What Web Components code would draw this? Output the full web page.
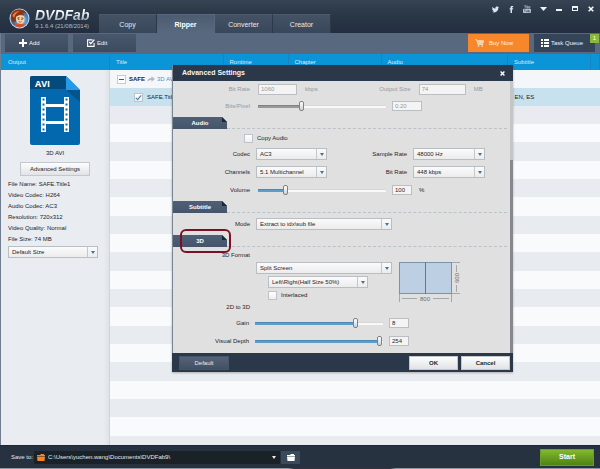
<!DOCTYPE html>
<html lang="en">
<head>
<meta charset="utf-8">
<title>DVDFab Ripper</title>
<style>
  body { margin: 0; font: 6px/8px "Liberation Sans", Arial, sans-serif; color: #1d2226; background: #e9ecf1; }
</style>
</head>
<body>
<df-app></df-app>
<script>
const base = `<style>
  *, ::before, ::after { box-sizing: border-box; }
  button, input, select { font: inherit; color: inherit; margin: 0; border-radius: 0; }
  button { cursor: pointer; padding: 0; border: 0; background: none; }
  svg { display: block; flex: none; }
</style>`;

function define(name, render) {
  customElements.define(name, class extends HTMLElement {
    connectedCallback() {
      if (this.shadowRoot) return;
      const t = document.createElement('template');
      t.innerHTML = base + render(n => this.getAttribute(n) || '', n => this.hasAttribute(n));
      this.attachShadow({ mode: 'open' }).appendChild(t.content.cloneNode(true));
    }
  });
}

/* ---------- form controls ---------- */
define('df-select', a => `<style>
  :host { display: flex; align-items: center; gap: 6px; }
  label { width: var(--label, 77px); text-align: right; flex: none; }
  .box { position: relative; width: var(--w, 71px); height: 12px; flex: none; }
  select { appearance: none; display: block; width: 100%; height: 100%; padding: 0 12px 0 3px; line-height: 10px;
    border: 1px solid #b9bec3; background: linear-gradient(#fbfbfb, #ececec); }
  .box::before { content: ""; position: absolute; right: 10px; top: 1px; bottom: 1px; width: 1px; background: #c3c8cd; }
  .box::after { content: ""; position: absolute; right: 3px; top: 5px; border: 2px solid transparent; border-top: 3px solid #3f7597; border-bottom: 0; pointer-events: none; }
</style>
${a('label') ? `<label for="s">${a('label')}</label>` : ''}
<div class="box"><select id="s" aria-label="${a('label') || a('name')}"><option>${a('value')}</option></select></div>`);

define('df-text', (a, h) => `<style>
  :host { display: flex; align-items: center; gap: 8px; }
  label { width: var(--label, 77px); text-align: right; flex: none; }
  input { width: var(--w, 39px); height: 11px; padding: 0 2px; border: 1px solid #bcbfc2; background: #f4f4f4; line-height: 9px; }
  :host([disabled]) { color: #989898; }
</style>
<label for="t">${a('label')}</label><input id="t" value="${a('value')}" ${h('disabled') ? 'disabled' : ''}><span>${a('unit')}</span>`);

define('df-range', (a, h) => `<style>
  :host { display: flex; align-items: center; --fill: #5b9dcb; }
  :host([disabled]) { color: #989898; --fill: #989898; }
  label { width: var(--label, 77px); text-align: right; flex: none; margin-right: var(--gap, 8px); }
  input[type=range] { appearance: none; width: 128px; height: 11px; background: none; flex: none; }
  input[type=range]::-webkit-slider-runnable-track { height: 3px; border-top: 1px solid #00000022;
    background: linear-gradient(90deg, var(--fill) ${a('value')}%, #f8f8f8 ${a('value')}%); background-origin: border-box; }
  input[type=range]::-webkit-slider-thumb { appearance: none; width: 5px; height: 10px; margin-top: -5px; border: 1px solid #7d8287; border-radius: 2px; background: linear-gradient(#fff, #cfd2d4); }
  .n { width: var(--nw, 20px); height: 10px; padding: 0 2px; margin-left: 6px; border: 1px solid #bcbfc2; background: #f4f4f4; line-height: 8px; }
  span { margin-left: 7px; }
</style>
<label for="r">${a('label')}</label><input type="range" id="r" value="${a('value')}" ${h('disabled') ? 'disabled' : ''}>
<input class="n" aria-label="${a('label')} value" value="${a('text')}" ${h('disabled') ? 'disabled' : ''}><span>${a('unit')}</span>`);

define('df-check', (a, h) => `<style>
  :host { display: block; }
  label { display: flex; align-items: center; gap: 4px; }
  input { appearance: none; width: 9px; height: 9px; border: 1px solid #bfc3c7; background: linear-gradient(#fff, #eee); display: grid; place-items: center; }
  input:checked::after { content: ""; width: 3px; height: 6px; border: solid #3b7ba5; border-width: 0 1px 1px 0; transform: rotate(40deg); }
</style>
<label><input type="checkbox" ${h('checked') ? 'checked' : ''}><slot></slot></label>`);

define('df-button', () => `<style>
  :host { display: block; height: 14px; }
  button { width: 100%; height: 100%; color: var(--fg, #20262b); font-weight: var(--weight, 400); font-size: var(--size, 6px);
    border: 1px solid var(--line, #c3c8cd); background: var(--bg, linear-gradient(#fdfdfd, #e0e3e6)); }
</style><button type="button"><slot></slot></button>`);

/* ---------- title bar ---------- */
define('df-titlebar', () => `<style>
  :host { display: flex; height: 33px; background: linear-gradient(#354352, #2b3848 40%, #222e3f); color: #eef2f6; }
  .logo { width: 99px; display: flex; padding: 8px 0 0 9px; gap: 5px; flex: none; }
  .name { font: italic bold 14px/14px "Liberation Sans", Arial, sans-serif; color: transparent; background: linear-gradient(#fff 30%, #9eabb9 85%); background-clip: text; -webkit-background-clip: text; }
  .ver { color: #a8bed2; white-space: nowrap; }
  .word { display: flex; flex-direction: column; }
  nav { display: flex; align-self: flex-end; height: 19px; }
  nav a { width: 58px; font-size: 7px; line-height: 19px; text-align: center; color: #e4eaf0; text-decoration: none; background: linear-gradient(#445264, #38475a); border-right: 1px solid #2c394a; border-top: 1px solid #4b596a; }
  nav a.on { background: linear-gradient(#4d5c70, #58687e); font-weight: bold; color: #fff; border-color: #58687e; }
  .sys { margin-left: auto; display: flex; padding: 3px 1px 0 0; }
  .sys button { width: 16px; height: 12px; display: grid; place-items: center; }
</style>
<div class="logo">
  <svg width="21" height="21" viewBox="0 0 21 21" aria-hidden="true">
    <defs><radialGradient id="g" cx=".6" cy=".6"><stop offset="0" stop-color="#8fd4f5"/><stop offset="1" stop-color="#2b67a6"/></radialGradient></defs>
    <circle cx="10.500" cy="10.500" r="10" fill="#c9d9e6"/><circle cx="10.500" cy="10.500" r="9" fill="url(#g)"/>
    <path d="M2 10C1.500 5 5 1.700 9 1.600c4-.2 7 1 8 3.200-1.500-.4-2.500 0-3.300.6 1.200.5 1.500 1.300 1.400 2.100-1.800-1.100-3.700-.8-5.300.1C8 10 7.500 12.500 6 14.500 4 13.800 2.400 12.500 2 10z" fill="#8a3418"/>
    <path d="M3.400 8c1-3 4-4.900 7.400-4.700C8 4.400 6 6.300 5.300 9.500z" fill="#ec8238"/>
    <path d="M7 9c2-2 5.500-2.500 8-.7.800 1.600.8 3.700-.2 5.600-1.200 1.900-3.500 2.700-5.300 1.700C7.500 14.500 6.400 11.500 7 9z" fill="#f9cfa6"/>
    <path d="M8.300 10.200l2.200-.5M12.400 9.900l2 .5" stroke="#46200f" stroke-width=".8"/><circle cx="9.800" cy="11.200" r=".6" fill="#222"/><circle cx="13" cy="11.300" r=".6" fill="#222"/>
    <path d="M9.800 13.600q1.500 1 2.800 0" stroke="#a33c28" stroke-width=".7" fill="none"/>
    <path d="M5 16.500c3-1.200 7.500-1 11 .2-3 3.300-8 3.400-11-.2z" fill="#d94d27"/>
  </svg>
  <div class="word"><span class="name">DVDFab</span><span class="ver">9.1.6.4 (21/08/2014)</span></div>
</div>
<nav><a href="#copy">Copy</a><a href="#ripper" class="on">Ripper</a><a href="#converter">Converter</a><a href="#creator">Creator</a></nav>
<div class="sys">
  <button aria-label="Twitter"><svg width="7" height="7" viewBox="0 0 24 22"><path d="M24 4c-1 1-2 1.500-2.500 2C22 14 16 21 7.500 21 5 21 2 20.500 0 19c3 0 5-.5 7-2-2.500 0-4-1.500-4.600-3.500h2C2 13 .6 11 .6 8.500l2 .6C.8 7.500 0 5 1.600 2.500 4 5.500 7.500 7.500 11.800 7.700 11 3 14 1 17 1c1.500 0 2.700.6 3.600 1.500L23.500 1.500c-.3 1-1 2-2 2.700z" fill="#d6e5f5"/></svg></button>
  <button aria-label="Facebook"><svg width="5" height="7" viewBox="0 0 5 7"><path d="M1.500 7V3.500H.6V2.300h.9V1.500C1.500.5 2 0 3 0h1.200v1.200H3.500c-.4 0-.5.2-.5.500v.6h1.200L4 3.500H3V7z" fill="#d6e5f5"/></svg></button>
  <button aria-label="YouTube"><svg width="8" height="8" viewBox="0 0 16 16"><path d="M3 0l1.500 3V6M6 0L4.500 3M7.500 2h2v4h-2zM11.500 2v4h2.200V2" stroke="#b9c8d8" stroke-width="1.200" fill="none"/><rect x="0" y="7.500" width="16" height="8.500" rx="2" fill="#b9c8d8"/><path d="M2 9.500h3M3.500 9.500V14M6.500 11v3h2v-3M10 9v5h1.700v-3H10M13.300 11v3h1.500" stroke="#354352" fill="none"/></svg></button>
  <button aria-label="Menu"><svg width="7" height="4"><path d="M0 0h7L3.500 4z" fill="#eef3f8"/></svg></button>
  <button aria-label="Minimize"><svg width="6" height="6"><path d="M0 3h6v2H0z" fill="#eef3f8"/></svg></button>
  <button aria-label="Maximize"><svg width="6" height="6"><path d="M0 0h6v5H0zM1 2v2h4V2z" fill="#eef3f8" fill-rule="evenodd"/></svg></button>
  <button aria-label="Close"><svg width="6" height="6"><path d="M.7.7l4.600 4.600M5.300.7L.7 5.300" stroke="#fff" stroke-width="1.500"/></svg></button>
</div>`);

/* ---------- toolbar ---------- */
define('df-toolbar', () => `<style>
  :host { display: flex; height: 21px; padding: 1px 5px 2px 4px; gap: 5px; background: #58687e; color: #eef2f6; border-left: 1px solid #6f7d8f; }
  button { width: 63px; height: 18px; display: flex; align-items: center; gap: 2px; padding-left: 14px; background: linear-gradient(#48576b, #3d4b5f); }
  .buy { margin-left: auto; width: 61px; padding-left: 7px; background: #f8872c; gap: 5px; color: #fff3e6; }
  .q { position: relative; width: 61px; padding-left: 7px; background: #36445a; }
  .badge { position: absolute; right: -4px; top: 0; width: 9px; height: 9px; background: #8ab83c; color: #fff; line-height: 9px; text-align: center; }
</style>
<button><svg width="8" height="8"><path d="M3 0h2v3h3v2H5v3H3V5H0V3h3z" fill="#fff"/></svg>Add</button>
<button><svg width="8" height="8" viewBox="0 0 8 8"><path d="M5.500.9H.6v6.500h6.500V4" fill="none" stroke="#fff" stroke-width="1.100"/><path d="M2.300 3l1.500 1.700L7.400.6" fill="none" stroke="#fff" stroke-width="1.300"/></svg>Edit</button>
<button class="buy"><svg width="9" height="8" viewBox="0 0 9 8"><path d="M0 .6h1.600L3 5.500h5M2 1.700h6.600L8 4.300H2.700M4 1.700v2.600M5.600 1.700v2.600M7.100 1.700v2.600M2.300 3h6" fill="none" stroke="#fff3e0" stroke-width=".7"/><circle cx="3.500" cy="7" r=".8" fill="#fff3e0"/><circle cx="7.200" cy="7" r=".8" fill="#fff3e0"/></svg>Buy Now</button>
<button class="q"><svg width="8" height="8"><path d="M0 0h2v2H0zM3 0h5v2H3zM0 3h2v2H0zM3 3h5v2H3zM0 6h2v2H0zM3 6h5v2H3z" fill="#fff"/></svg>Task Queue<span class="badge">1</span></button>`);

/* ---------- output sidebar ---------- */
define('df-sidebar', () => `<style>
  :host { display: block; width: 110px; flex: none; background: linear-gradient(90deg, #e9edf1 95%, #dfe3e8); border-left: 1px solid #6f7d8f; border-right: 1px solid #cfd5db; }
  h2 { margin: 0 -1px 0 0; font: inherit; line-height: 16px; height: 16px; padding-left: 7px; background: #0b94d8; color: #d5effc; border-right: 1px solid #1587c0; }
  .fmt { display: flex; flex-direction: column; align-items: center; padding-top: 6px; }
  .fmt p { margin: 4px 0 5px; }
  df-button { width: 70px; }
  ul { list-style: none; margin: 3px 0 1px; padding: 0 0 0 7px; line-height: 11px; }
  df-select { --w: 90px; padding-left: 7px; }
</style>
<h2>Output</h2>
<div class="fmt">
  <svg width="50" height="69" viewBox="0 0 50 69" role="img" aria-label="AVI file">
    <path d="M2 0h34l14 14v53q0 2-2 2H2q-2 0-2-2V2q0-2 2-2z" fill="#0468ae"/>
    <path d="M2 0h34v13H0V2q0-2 2-2z" fill="#054a7d"/>
    <path d="M36 14h14v12z" fill="#04548d"/><path d="M36 0l14 14H36z" fill="#229be9"/>
    <text x="5" y="11" font-size="9" font-weight="bold" fill="#fff" font-family="Open Sans, sans-serif">AVI</text>
    <g fill="#fff"><path d="M11 21h5v35h-5zM34 21h5v35h-5zM16 28h18v3H16zM16 45h18v3H16z"/></g>
    <path d="M13.500 22.500v33M36.500 22.500v33" stroke="#0468ae" stroke-width="2" stroke-dasharray="2 3"/>
  </svg>
  <p>3D AVI</p>
  <df-button>Advanced Settings</df-button>
</div>
<ul><li>File Name: SAFE.Title1</li><li>Video Codec: H264</li><li>Audio Codec: AC3</li><li>Resolution: 720x312</li><li>Video Quality: Normal</li><li>File Size: 74 MB</li></ul>
<df-select name="Size" value="Default Size"></df-select>`);

/* ---------- title list ---------- */
define('df-titles', () => `<style>
  :host { display: block; flex: 1; min-width: 0; overflow: hidden;
    background: repeating-linear-gradient(#e8ebf0 0 18px, #f8fafc 18px 36px, #e8ebf0 36px 55px, #f8fafc 55px 73px, #e8ebf0 73px 91px, #f8fafc 91px 110px) 0 52px; }
  table { width: 100%; border-collapse: collapse; table-layout: fixed; }
  th { height: 16px; padding: 0 0 0 6px; text-align: left; font-weight: 400; color: #d5effc; background: #0b94d8; border-right: 1px solid #1587c0; }
  td { height: 18px; padding: 0 0 0 7px; background: #f4f6f9; white-space: nowrap; }
  .sel td { background: #c8e1ee; }
  .line { display: flex; align-items: center; gap: 2px; }
  .sel .line { padding-left: 17px; }
  .line button { width: 9px; height: 9px; margin-right: 1px; border: 1px solid #c6cbd0; background: #fdfdfd; display: grid; place-items: center; }
  a { color: #3f9bc9; text-decoration: none; }
</style>
<table>
  <colgroup><col style="width:113px"><col style="width:65px"><col style="width:93px"><col><col style="width:83px"><col style="width:9px"></colgroup>
  <thead><tr><th>Title</th><th>Runtime</th><th>Chapter</th><th>Audio</th><th>Subtitle</th><th></th></tr></thead>
  <tbody>
    <tr><td colspan="6"><div class="line"><button aria-label="Collapse"><svg width="5" height="1"><path d="M0 0h5v1H0z" fill="#555"/></svg></button><b>SAFE</b>
      <svg width="8" height="6" viewBox="0 0 9 6"><path d="M.5 6C.5 3 2 2 5 2V0l4 3-4 3V4C3 4 1.500 4.500.5 6z" fill="#b4bac1"/></svg><a href="#avi">3D AVI</a></div></td></tr>
    <tr class="sel"><td><div class="line"><df-check checked>SAFE.Title1</df-check></div></td><td></td><td></td><td></td><td>EN, ES</td><td></td></tr>
  </tbody>
</table>`);

/* ---------- settings dialog ---------- */
define('df-section', (a, h) => `<style>
  :host { display: block; margin-top: 2px; }
  header { display: flex; height: 12px; margin-bottom: 2px; }
  h3 { position: relative; margin: 0; width: 54px; font: bold 6px/12px "Liberation Sans", Arial, sans-serif; text-align: center; color: #fff;
    background: linear-gradient(#4e6078, #45546a); clip-path: none; }
  h3 svg { position: absolute; right: 0; top: 0; }
  .rule { flex: 1; margin-right: 6px; border-bottom: 1px dashed #bcc2c8; }
  .ring { position: absolute; left: 7px; right: -4px; top: -6px; bottom: -6px; border: 2px solid #7c1029; border-radius: 6px; }
</style>
<header><h3>${a('label')}<svg width="5" height="5" aria-hidden="true"><path d="M0 0h5v5z" fill="#e0e0e0"/><path d="M0 0v5h5z" fill="#1c2735"/></svg>${h('ring') ? '<span class="ring"></span>' : ''}</h3><div class="rule"></div></header><slot></slot>`);

define('df-stereo', () => `<style>:host { display: block; }</style>
<svg width="64" height="42" viewBox="0 0 64 42" role="img" aria-label="Split screen frame size">
  <rect x=".5" y=".5" width="52" height="31" fill="#bdd0e3" stroke="#7b93a8"/><path d="M26.500 0v32" stroke="#5f7b93"/>
  <path d="M.5 32v8M52.500 32v8M53 .5h8M53 31.500h8M3 36.500h15M34 36.500h16M57.500 3v7M57.500 23v7" stroke="#a4a8ac" fill="none"/>
  <g font-size="6" fill="#666c72" text-anchor="middle" font-family="Liberation Sans, sans-serif"><text x="26" y="39">800</text><text transform="translate(60 16) rotate(-90)">600</text></g>
</svg>`);

define('df-dialog', () => `<style>
  :host { display: block; background: #e0e0e0; border-left: 1px solid #7a8591; color: #1f2428; box-shadow: 0 1px 2px #0004; }
  .top { display: flex; align-items: center; justify-content: space-between; height: 16px; padding: 0 8px 0 9px; background: #2b384a; color: #f4f6f8; font-weight: bold; font-size: 7px; }
  .top button { width: 5px; height: 10px; display: grid; place-items: center; }
  .body { padding-bottom: 3px; background: linear-gradient(#c4c6c8 79px, #85898e 79px) right / 3px 100% no-repeat; }
  .row { display: flex; height: 18px; align-items: center; }
  .first { height: 16px; }
  .low { height: 14px; }
  .min { height: 12px; }
  .tag { width: 77px; text-align: right; }
  .right { --label: 80px; --w: 72px; }
  .size { --label: 93px; --w: 47px; }
  .wide { --w: 136px; }
  .in { padding-left: 83px; }
  .far { padding-left: 95px; }
  .copy { padding-left: 71px; }
  .cols { display: flex; gap: 7px; }
  .cols > div { width: 219px; }
  df-stereo { padding-top: 13px; }
  .depth { --label: 76px; --gap: 6px; padding-top: 1px; }
  .foot { display: flex; gap: 3px; height: 19px; align-items: center; padding: 0 3px 0 7px; margin-left: -1px; background: #2b384a; }
  .foot df-button { width: 49px; --weight: bold; }
  .foot .def { --weight: 400; width: 50px; margin-right: auto; --bg: linear-gradient(#556376, #415064); --fg: #e6ebf0; --line: #46556a; }
</style>
<div class="top"><span>Advanced Settings</span><button aria-label="Close"><svg width="5" height="5"><path d="M.6.6l3.800 3.800M4.400.6L.6 4.400" stroke="#fff" stroke-width="1.400"/></svg></button></div>
<div class="body">
  <div class="row first"><df-text label="Bit Rate" value="1060" unit="kbps" disabled></df-text><df-text class="size" label="Output Size" value="74" unit="MB" disabled></df-text></div>
  <df-range class="row" style="--nw:30px" label="Bits/Pixel" value="33" text="0.20" disabled></df-range>
  <df-section label="Audio">
    <div class="row low copy"><df-check>Copy Audio</df-check></div>
    <div class="row"><df-select label="Codec" value="AC3"></df-select><df-select class="right" label="Sample Rate" value="48000 Hz"></df-select></div>
    <div class="row"><df-select label="Channels" value="5.1 Multichannel"></df-select><df-select class="right" label="Bit Rate" value="448 kbps"></df-select></div>
    <df-range class="row" label="Volume" value="20" text="100" unit="%"></df-range>
  </df-section>
  <df-section label="Subtitle">
    <df-select class="row wide" label="Mode" value="Extract to idx\\sub file"></df-select>
  </df-section>
  <df-section label="3D" ring>
    <div class="cols"><div>
      <div class="row min"><span class="tag">3D Format</span></div>
      <div class="row low in"><df-select class="wide" name="3D format" value="Split Screen"></df-select></div>
      <div class="row low far"><df-select style="--w:100px" name="Layout" value="Left\\Right(Half Size 50%)"></df-select></div>
      <div class="row min far"><df-check>Interlaced</df-check></div>
      <div class="row min"><span class="tag">2D to 3D</span></div>
    </div><df-stereo></df-stereo></div>
    <div class="depth">
      <df-range class="row" label="Gain" value="80" text="8"></df-range>
      <df-range class="row" label="Visual Depth" value="99" text="254"></df-range>
    </div>
  </df-section>
</div>
<div class="foot"><df-button class="def">Default</df-button><df-button>OK</df-button><df-button>Cancel</df-button></div>`);

/* ---------- bottom bar ---------- */
define('df-savebar', () => `<style>
  :host { display: flex; align-items: center; height: 23px; padding: 0 6px 0 11px; background: #263240; color: #e3e9ef; border-top: 1px solid #1d2833; }
  .path { position: relative; display: flex; align-items: center; width: 246px; height: 13px; margin-left: 1px; background: #1b2227; }
  .path svg { position: absolute; left: 3px; pointer-events: none; }
  select { appearance: none; width: 100%; height: 100%; padding: 0 12px 0 14px; border: 0; background: none; }
  option { color: #000; }
  .path::after { content: ""; position: absolute; right: 4px; border: 2px solid transparent; border-top: 3px solid #eee; border-bottom: 0; pointer-events: none; }
  .open { width: 19px; height: 13px; margin-left: 1px; background: #3b4a5b; display: grid; place-items: center; }
  df-button { width: 54px; height: 17px; margin-left: auto; --bg: linear-gradient(#83b82f, #4c8412); --fg: #fff; --weight: bold; --size: 7px; --line: #6a9d2c; }
</style>
<label for="p">Save to:</label>
<div class="path"><svg width="8" height="7"><path d="M1 1h2l1-1h3v1h1v1H0V1zM0 2.500h8L7.500 7h-7z" fill="#f5862c"/></svg><select id="p"><option>C:\\Users\\yuchen.wang\\Documents\\DVDFab9\\</option></select></div>
<button class="open" aria-label="Browse"><svg width="8" height="7"><path d="M1 1h2l1-1h3v1h1v1H0V1zM0 2.500h8L7.500 7h-7z" fill="#fff"/></svg></button>
<df-button>Start</df-button>`);

define('df-app', () => `<style>
  :host { position: relative; display: flex; flex-direction: column; min-height: 100vh; }
  main { flex: 1; display: flex; }
  df-dialog { position: absolute; left: 172px; right: 87px; top: 65px; }
  .edge { height: 1px; background: linear-gradient(90deg, #8d98a4 48%, #32343f 49% 65%, #8d98a4 66%); }
</style>
<df-titlebar></df-titlebar><df-toolbar></df-toolbar>
<main><df-sidebar></df-sidebar><df-titles></df-titles></main>
<df-savebar></df-savebar><div class="edge"></div>
<df-dialog></df-dialog>`);
</script>
</body>
</html>
